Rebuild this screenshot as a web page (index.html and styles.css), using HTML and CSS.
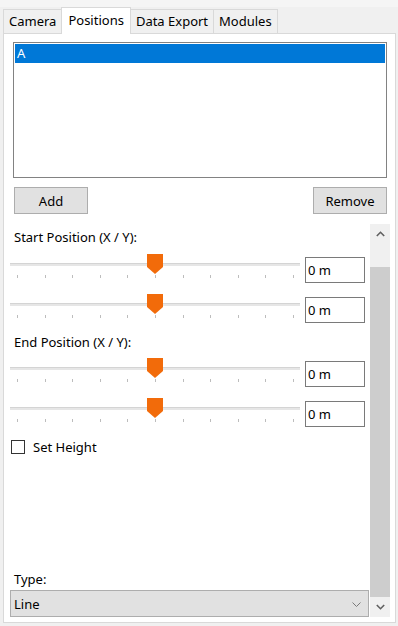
FILE: index.html
```html
<!DOCTYPE html>
<html lang="en">
<head>
    <meta charset="UTF-8">
    <meta name="viewport" content="width=device-width, initial-scale=1.0">
    <title>Positions</title>
    <link rel="stylesheet" href="styles.css">
</head>
<body>
    <div class="window">
        <div class="tabs">
            <div class="tab">Camera</div>
            <div class="tab active">Positions</div>
            <div class="tab">Data Export</div>
            <div class="tab">Modules</div>
        </div>

        <div class="panel">
            <div class="listbox">
                <div class="list-item selected">A</div>
            </div>

            <div class="button-row">
                <button class="btn">Add</button>
                <button class="btn">Remove</button>
            </div>

            <div class="scroll-area">
                <div class="scroll-content">
                    <div class="label start-label">Start Position (X / Y):</div>
                    <div class="slider-row">
                        <div class="slider"><div class="track"></div><div class="ticks"></div></div>
                        <input class="value" type="text" value="0 m">
                    </div>
                    <div class="slider-row second">
                        <div class="slider"><div class="track"></div><div class="ticks"></div></div>
                        <input class="value" type="text" value="0 m">
                    </div>

                    <div class="label end-label">End Position (X / Y):</div>
                    <div class="slider-row end-first">
                        <div class="slider"><div class="track"></div><div class="ticks"></div></div>
                        <input class="value" type="text" value="0 m">
                    </div>
                    <div class="slider-row second">
                        <div class="slider"><div class="track"></div><div class="ticks"></div></div>
                        <input class="value" type="text" value="0 m">
                    </div>

                    <label class="check-row">
                        <span class="checkbox"></span>
                        <span>Set Height</span>
                    </label>

                    <div class="spacer"></div>

                    <div class="label type-label">Type:</div>
                    <div class="dropdown">
                        <span>Line</span>
                        <svg width="9" height="5" viewBox="0 0 9 5"><path d="M0.5 0.5 L4.5 4.5 L8.5 0.5" stroke="#7a7a7a" stroke-width="1" fill="none"/></svg>
                    </div>
                </div>

                <div class="scrollbar">
                    <div class="scroll-btn">
                        <svg width="9" height="6" viewBox="0 0 9 6"><path d="M0.8 5 L4.5 1.3 L8.2 5" stroke="#606060" stroke-width="1.6" fill="none"/></svg>
                    </div>
                    <div class="scroll-thumb"></div>
                    <div class="scroll-btn">
                        <svg width="9" height="6" viewBox="0 0 9 6"><path d="M0.8 1 L4.5 4.7 L8.2 1" stroke="#606060" stroke-width="1.6" fill="none"/></svg>
                    </div>
                </div>
            </div>
        </div>
    </div>

    <script>
        // build tick marks and the thumb for every slider
        const thumbSvg = '<svg class="thumb" width="16" height="20" viewBox="0 0 16 20">' +
            '<path d="M0 0 H16 V13 L8 20 L0 13 Z" fill="#f26b0a"/></svg>';

        document.querySelectorAll('.slider').forEach((slider) => {
            const ticks = slider.querySelector('.ticks');
            for (let i = 0; i < 11; i++) {
                ticks.appendChild(document.createElement('span'));
            }
            slider.insertAdjacentHTML('beforeend', thumbSvg);
        });
    </script>
</body>
</html>
```

FILE: styles.css
```css
body {
    margin: 0;
    background-color: #f0f0f0;
    font-family: 'Noto Sans', 'Segoe UI', sans-serif;
    font-size: 13px;
    color: #000;
}

.window {
    height: 626px;
    padding: 7px 2px 0 3px;
    box-sizing: border-box;
    background: linear-gradient(#f5f5f5 0, #f5f5f5 7px, #f0f0f0 7px);
}

/* tab strip */
.tabs {
    display: flex;
    align-items: flex-end;
    height: 26px;
}

.tab {
    height: 24px;
    line-height: 23px;
    padding: 0 5px;
    border: 1px solid #d9d9d9;
    border-bottom: none;
    background-color: #f0f0f0;
    box-sizing: border-box;
    margin-left: -1px;
}

.tab:first-child {
    margin-left: 0;
}

.tab.active {
    height: 27px;
    line-height: 24px;
    padding: 0 6px;
    background-color: #fff;
    margin-bottom: -1px;
    position: relative;
    z-index: 1;
}

/* main panel */
.panel {
    height: 590px;
    box-sizing: border-box;
    border: 1px solid #d9d9d9;
    background-color: #fff;
    padding: 8px 5px 5px 6px;
    display: flex;
    flex-direction: column;
}

.listbox {
    height: 136px;
    margin: 0 3px;
    border: 1px solid #828282;
    padding: 1px;
    box-sizing: border-box;
}

.list-item {
    height: 19px;
    line-height: 19px;
    padding-left: 2px;
}

.list-item.selected {
    background-color: #0078d7;
    color: #fff;
}

.button-row {
    display: flex;
    justify-content: space-between;
    margin: 9px 3px 0 4px;
}

.btn {
    width: 74px;
    height: 27px;
    border: 1px solid #adadad;
    background-color: #e1e1e1;
    font-family: inherit;
    font-size: 13px;
    color: #000;
    padding: 0;
}

/* scrollable settings */
.scroll-area {
    flex: 1;
    display: flex;
    margin-top: 10px;
}

.scroll-content {
    flex: 1;
    display: flex;
    flex-direction: column;
    padding-right: 1px;
}

.label {
    height: 16px;
    line-height: 16px;
    padding-left: 4px;
}

.start-label {
    margin-top: 5px;
}

.end-label {
    margin-top: 11px;
}

.type-label {
    margin-bottom: 3px;
}

.slider-row {
    display: flex;
    align-items: flex-start;
    gap: 5px;
    margin-top: 7px;
}

.slider-row.second {
    margin-top: 9px;
}

.slider-row.end-first {
    margin-top: 6px;
}

.slider {
    position: relative;
    width: 290px;
    height: 30px;
}

.track {
    height: 3px;
    margin-top: 11px;
    background-color: #e6e6e6;
    border-top: 1px solid #d4d4d4;
    box-sizing: border-box;
}

.ticks {
    display: flex;
    justify-content: space-between;
    margin-top: 9px;
    padding: 0 6px 0 7px;
}

.ticks span {
    width: 1px;
    height: 3px;
    background-color: #bdbdbd;
}

.thumb {
    position: absolute;
    top: 2px;
    left: 137px;
}

.value {
    width: 60px;
    height: 26px;
    margin-top: 5px;
    box-sizing: border-box;
    border: 1px solid #7a7a7a;
    padding: 0 2px;
    font-family: inherit;
    font-size: 13px;
    color: #000;
    outline: none;
}

.check-row {
    display: flex;
    align-items: center;
    gap: 8px;
    height: 16px;
    margin-top: 12px;
    padding-left: 1px;
}

.checkbox {
    width: 14px;
    height: 14px;
    box-sizing: border-box;
    border: 1px solid #333;
    background-color: #fff;
}

.spacer {
    flex: 1;
}

.dropdown {
    height: 27px;
    box-sizing: border-box;
    border: 1px solid #adadad;
    background-color: #e1e1e1;
    display: flex;
    align-items: center;
    justify-content: space-between;
    padding: 0 7px 0 3px;
}

.dropdown svg {
    margin-top: 1px;
}

/* vertical scrollbar */
.scrollbar {
    width: 20px;
    display: flex;
    flex-direction: column;
    background-color: #f0f0f0;
}

.scroll-btn {
    height: 20px;
    display: flex;
    align-items: center;
    justify-content: center;
}

.scroll-thumb {
    flex: 1;
    margin-top: 23px;
    background-color: #cdcdcd;
}
```
